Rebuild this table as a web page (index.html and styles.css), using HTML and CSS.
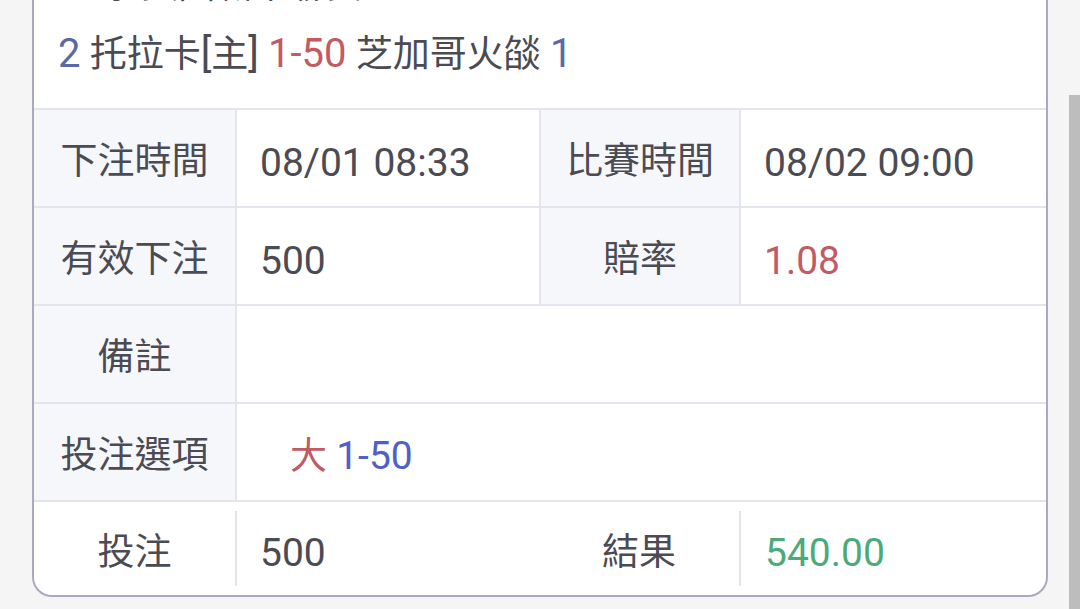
FILE: index.html
```html
<!DOCTYPE html>
<html lang="zh-Hant">
<head>
<meta charset="utf-8">
<link rel="stylesheet" href="styles.css">
</head>
<body>
<div class="page">
  <div class="card">
    <div class="head">
      <div class="line line-top">籃球 美國職業聯賽</div>
      <div class="line"><span class="n blue">2</span> 托拉卡<span class="n">[</span>主<span class="n">]</span> <span class="n red">1-50</span> 芝加哥火燄 <span class="n blue">1</span></div>
    </div>
    <div class="grid">
      <div class="cell lab">下注時間</div>
      <div class="cell val"><span class="n">08/01 08:33</span></div>
      <div class="cell lab">比賽時間</div>
      <div class="cell val"><span class="n">08/02 09:00</span></div>

      <div class="cell lab">有效下注</div>
      <div class="cell val"><span class="n">500</span></div>
      <div class="cell lab">賠率</div>
      <div class="cell val"><span class="n red">1.08</span></div>

      <div class="cell lab">備註</div>
      <div class="cell val span3"></div>

      <div class="cell lab">投注選項</div>
      <div class="cell val span3 opt"><span class="optxt"><span class="red">大</span> <span class="n bright">1-50</span></span></div>
    </div>
    <div class="foot">
      <div class="fcell flab">投注</div>
      <div class="sep"></div>
      <div class="fcell fval"><span class="n">500</span></div>
      <div class="fcell flab2">結果</div>
      <div class="sep"></div>
      <div class="fcell fval2"><span class="n green">540.00</span></div>
    </div>
  </div>
</div>
<div class="scrollbar"></div>
</body>
</html>
```

FILE: styles.css
```css
html, body {
  margin: 0;
  padding: 0;
  background: #f5f5f6;
  overflow: hidden;
  height: 609px;
}
body {
  font-family: Roboto, "Noto Sans CJK TC", sans-serif;
  font-size: 37px;
  color: #4b4b53;
}
.n {
  font-size: 39px;
}
.page {
  padding: 0 32px;
}
.card {
  margin-top: -62px;
  background: #fff;
  border: 2px solid #a9aac2;
  border-radius: 20px;
  overflow: hidden;
}
.head {
  padding: 16px 24px 22px;
}
.line {
  height: 64px;
  line-height: 64px;
  white-space: nowrap;
}
.line-top {
  height: 66px;
  line-height: 60px;
}
.head .line .n {
  font-size: 40px;
}
.blue { color: #5a69a6; }
.red { color: #c25a64; }
.bright { color: #4d62c4; }
.green { color: #4caa78; }
.grid {
  display: grid;
  grid-template-columns: 201px 302px 198px 1fr;
  gap: 2px;
  background: #e3e4ec;
  padding: 2px 0;
}
.cell {
  height: 96px;
  box-sizing: border-box;
  display: flex;
  align-items: center;
  background: #fff;
}
.lab {
  background: #f6f7fb;
  justify-content: center;
}
.val {
  padding-left: 23px;
  padding-top: 10px;
}
.span3 {
  grid-column: span 3;
}
.opt {
  padding-left: 53px;
  padding-top: 2px;
}
.optxt {
  white-space: pre;
}
.foot {
  display: flex;
  align-items: center;
  height: 93px;
}
.fcell {
  display: flex;
  align-items: center;
}
.flab {
  width: 201px;
  justify-content: center;
}
.sep {
  width: 2px;
  height: 75px;
  background: #e2e2e8;
}
.fval {
  width: 302px;
  padding-left: 23px;
  padding-top: 8px;
  box-sizing: border-box;
}
.flab2 {
  width: 200px;
  justify-content: center;
}
.fval2 {
  padding-left: 24px;
  padding-top: 8px;
}
.scrollbar {
  position: fixed;
  right: 0;
  top: 95px;
  bottom: 0;
  width: 11px;
  background: #bdbdbd;
}
```
